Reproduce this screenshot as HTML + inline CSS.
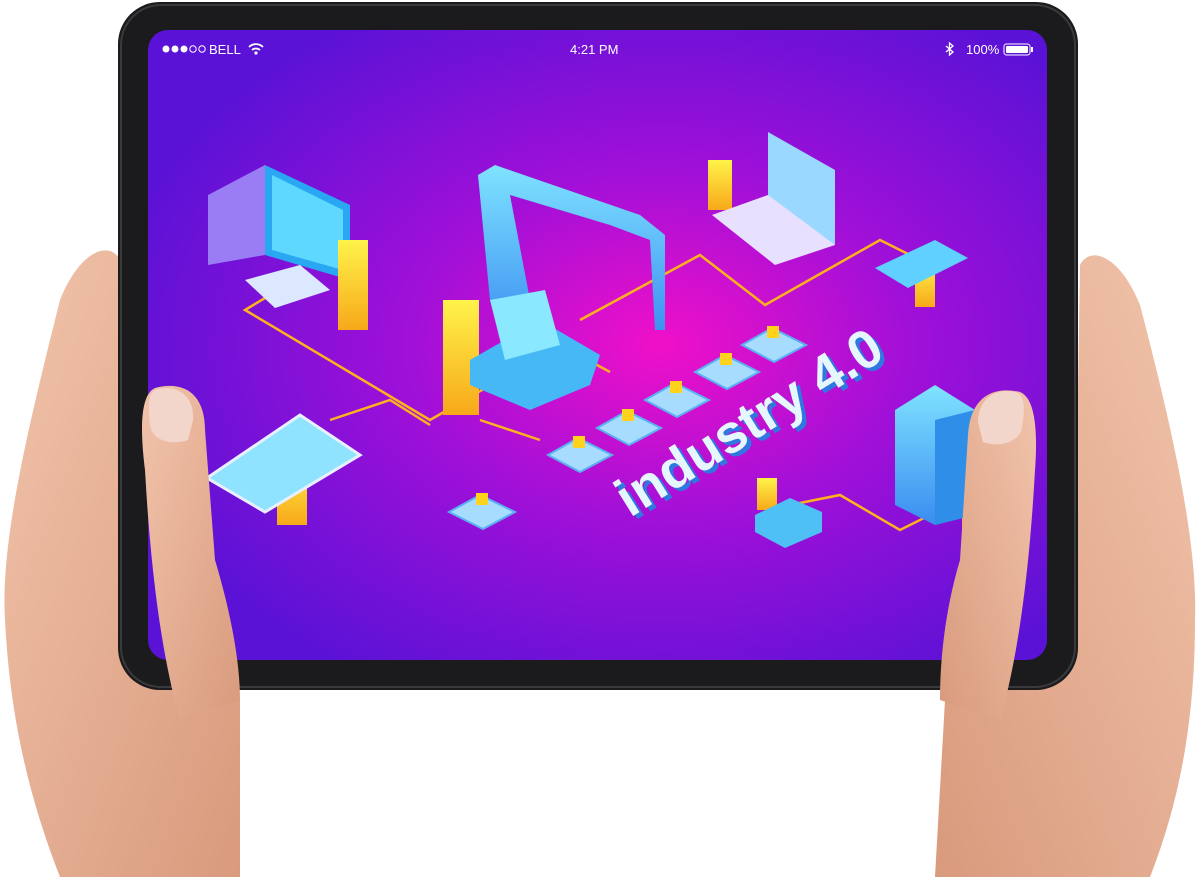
<!DOCTYPE html>
<html><head><meta charset="utf-8"><style>
html,body{margin:0;padding:0;background:#fff;width:1200px;height:877px;overflow:hidden}
svg{display:block}
</style></head><body>
<svg width="1200" height="877" viewBox="0 0 1200 877" xmlns="http://www.w3.org/2000/svg">
<defs>
<radialGradient id="scr" cx="0.57" cy="0.5" r="0.62">
<stop offset="0" stop-color="#f010c8"/>
<stop offset="0.45" stop-color="#a010d8"/>
<stop offset="1" stop-color="#5a12d6"/>
</radialGradient>
<linearGradient id="skin" x1="0" y1="0" x2="1" y2="1">
<stop offset="0" stop-color="#f1c4ab"/><stop offset="1" stop-color="#d99a7d"/>
</linearGradient>
<linearGradient id="skin2" x1="1" y1="0" x2="0" y2="1">
<stop offset="0" stop-color="#f1c4ab"/><stop offset="1" stop-color="#d99a7d"/>
</linearGradient>
<linearGradient id="blue" x1="0" y1="0" x2="0" y2="1">
<stop offset="0" stop-color="#7fe3ff"/><stop offset="1" stop-color="#3a8cf0"/>
</linearGradient>
<linearGradient id="yel" x1="0" y1="0" x2="0" y2="1">
<stop offset="0" stop-color="#fff34a"/><stop offset="1" stop-color="#f7a81a"/>
</linearGradient>
</defs>
<path d="M60 300 C80 250 110 240 120 260 L125 580 C170 620 230 640 240 700 L240 877 L60 877 C30 800 10 720 5 620 C0 540 30 420 60 300Z" fill="url(#skin)"/>
<path d="M1140 305 C1120 255 1090 245 1080 265 L1075 580 C1030 620 960 640 945 700 L935 877 L1150 877 C1180 800 1195 720 1195 620 C1198 540 1170 420 1140 305Z" fill="url(#skin2)"/>
<rect x="118" y="2" width="960" height="688" rx="42" fill="#1b1b1d"/>
<rect x="121" y="5" width="954" height="682" rx="40" fill="none" stroke="#3a3a3c" stroke-width="2"/>
<rect x="148" y="30" width="899" height="630" rx="20" fill="url(#scr)"/>
<g fill="#fff" font-family="Liberation Sans, sans-serif" font-size="13">
<circle cx="166" cy="49" r="3.5"/><circle cx="175" cy="49" r="3.5"/><circle cx="184" cy="49" r="3.5"/>
<circle cx="193" cy="49" r="3.2" fill="none" stroke="#fff"/><circle cx="202" cy="49" r="3.2" fill="none" stroke="#fff"/>
<text x="209" y="54">BELL</text>
<path d="M249 47 a10 10 0 0 1 14 0 M252 50 a6 6 0 0 1 8 0" stroke="#fff" stroke-width="1.8" fill="none"/><circle cx="256" cy="53" r="1.6"/>
<text x="570" y="54">4:21 PM</text>
<path d="M946 46 L953 52 L949.5 55 L949.5 43 L953 46 L946 52" stroke="#fff" stroke-width="1.3" fill="none"/>
<text x="966" y="54">100%</text>
<rect x="1004" y="44" width="26" height="11" rx="2.5" fill="none" stroke="#fff"/>
<rect x="1006" y="46" width="22" height="7" rx="1"/>
<rect x="1031" y="47" width="2" height="5"/>
</g>
<g stroke="#ffb21e" stroke-width="2.5" fill="none">
<path d="M270 295 L245 310 L430 420 L560 345 L610 372"/>
<path d="M330 420 L390 400 L430 425"/>
<path d="M580 320 L700 255 L765 305 L880 240 L910 255"/>
<path d="M765 510 L840 495 L900 530 L950 505"/>
<path d="M480 420 L540 440"/>
</g>
<polygon points="208,195 265,165 265,255 208,265" fill="#9a7cf5"/>
<polygon points="265,165 350,205 350,280 265,255" fill="#2aa7f2"/>
<polygon points="272,175 343,210 343,270 272,250" fill="#5fd8ff"/>
<polygon points="245,280 300,265 330,290 275,308" fill="#dce8ff"/>
<g fill="url(#yel)">
<rect x="338" y="240" width="30" height="90"/>
<rect x="443" y="300" width="36" height="115"/>
<rect x="708" y="160" width="24" height="50"/>
<rect x="915" y="262" width="20" height="45"/>
<rect x="277" y="455" width="30" height="70"/>
<rect x="757" y="478" width="20" height="32"/>
<rect x="962" y="490" width="14" height="40"/>
</g>
<path d="M478 175 L495 165 L640 215 L665 235 L665 330 L655 330 L650 240 L610 225 L510 195 L530 300 L545 330 L505 340 L490 300 Z" fill="url(#blue)"/>
<polygon points="470,360 540,320 600,355 590,385 530,410 470,385" fill="#45b8f5"/>
<polygon points="490,300 545,290 560,345 505,360" fill="#8ae8ff"/>
<polygon points="768,132 835,170 835,245 768,205" fill="#9ad8ff"/>
<polygon points="712,215 768,195 835,245 775,265" fill="#e8e0ff"/>
<polygon points="875,268 935,240 968,258 908,288" fill="#5fd0ff"/>
<polygon points="207,478 300,415 360,455 265,512" fill="#8fe3ff" stroke="#e8f0ff" stroke-width="3"/>
<polygon points="895,410 935,385 975,410 975,515 935,525 895,505" fill="url(#blue)"/>
<polygon points="935,420 975,410 975,515 935,525" fill="#2f8ee8"/>
<polygon points="755,515 790,498 822,512 822,532 785,548 755,532" fill="#4fc0f5"/>
<g fill="#a8dcff" stroke="#5ab0f0" stroke-width="2">
<polygon points="548,455 578,438 612,455 580,472"/>
<polygon points="597,428 627,411 661,428 629,445"/>
<polygon points="645,400 675,383 709,400 677,417"/>
<polygon points="695,372 725,355 759,372 727,389"/>
<polygon points="742,345 772,328 806,345 774,362"/>
<polygon points="449,512 480,495 515,512 483,529"/>
</g>
<g fill="#ffd21e">
<rect x="573" y="436" width="12" height="12"/><rect x="622" y="409" width="12" height="12"/>
<rect x="670" y="381" width="12" height="12"/><rect x="720" y="353" width="12" height="12"/>
<rect x="767" y="326" width="12" height="12"/><rect x="476" y="493" width="12" height="12"/>
</g>
<g transform="translate(630,518) rotate(-32)" font-family="Liberation Sans, sans-serif" font-weight="bold" font-size="54">
<text x="2" y="5" fill="#2f78e0">industry 4.0</text>
<text x="0" y="0" fill="#e6f6ff">industry 4.0</text>
</g>
<path d="M155 388 C185 380 205 395 205 430 L215 560 C230 610 240 660 240 700 L180 720 C160 650 150 560 145 470 C140 430 140 395 155 388Z" fill="url(#skin)"/>
<path d="M155 390 C175 383 195 395 193 420 L188 440 C170 446 152 440 150 425 C148 405 148 395 155 390Z" fill="#f3d6cb"/>
<path d="M1020 392 C990 385 970 400 968 435 L960 560 C945 610 940 660 940 700 L1000 720 C1020 650 1030 560 1035 470 C1038 430 1035 398 1020 392Z" fill="url(#skin2)"/>
<path d="M1018 393 C998 386 978 398 978 422 L983 442 C1000 448 1020 442 1022 427 C1025 408 1025 398 1018 393Z" fill="#f3d6cb"/>
</svg>
</body></html>
